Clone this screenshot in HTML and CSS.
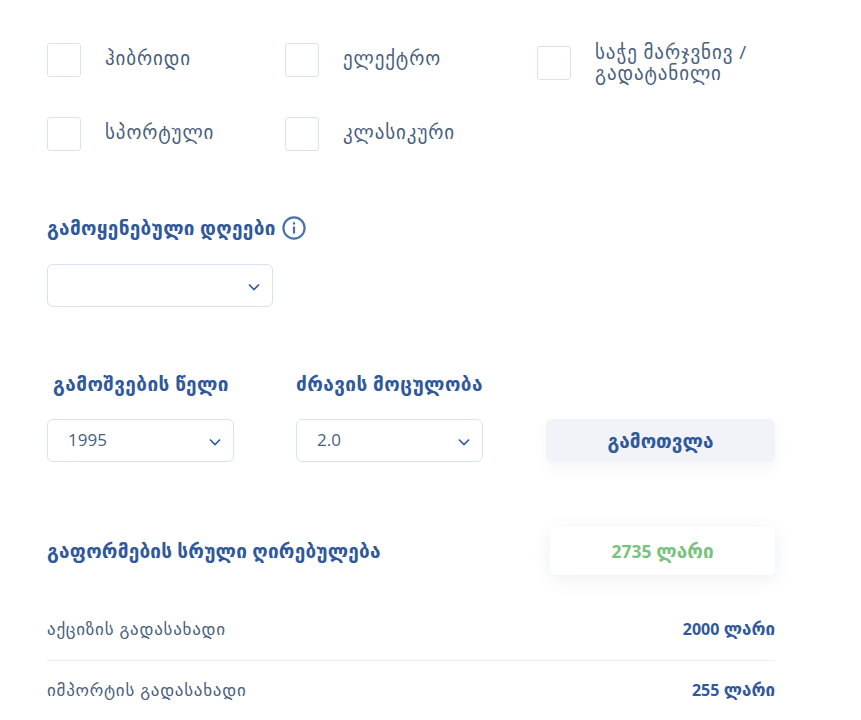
FILE: index.html
```html
<!DOCTYPE html>
<html lang="ka">
<head>
    <meta charset="UTF-8">
    <meta name="viewport" content="width=device-width, initial-scale=1.0">
    <title>განბაჟების კალკულატორი</title>
    <link rel="stylesheet" href="styles.css">
</head>
<body>
    <div class="calc">
        <div class="types">
            <label class="type"><span class="box"></span><span class="type-name">ჰიბრიდი</span></label>
            <label class="type"><span class="box"></span><span class="type-name">ელექტრო</span></label>
            <label class="type type-wide"><span class="box"></span><span class="type-name">საჭე მარჯვნივ / გადატანილი</span></label>
            <label class="type"><span class="box"></span><span class="type-name">სპორტული</span></label>
            <label class="type"><span class="box"></span><span class="type-name">კლასიკური</span></label>
        </div>

        <div class="days">
            <div class="title days-title">გამოყენებული დღეები
                <svg class="info" width="24" height="24" viewBox="0 0 24 24" fill="none" stroke="#4a73ab" stroke-width="2.2">
                    <circle cx="12" cy="12" r="10.6"/>
                    <path d="M12 10.5v7M12 6.3v2.2"/>
                </svg>
            </div>
            <div class="select days-select">
                <svg class="chev" width="12" height="8" viewBox="0 0 12 8" fill="none" stroke="#30599b" stroke-width="1.6"><path d="M1 1.5l5 5 5-5"/></svg>
            </div>
        </div>

        <div class="params">
            <div class="param">
                <div class="title param-year">გამოშვების წელი</div>
                <div class="select"><span class="select-value">1995</span>
                    <svg class="chev" width="12" height="8" viewBox="0 0 12 8" fill="none" stroke="#30599b" stroke-width="1.6"><path d="M1 1.5l5 5 5-5"/></svg>
                </div>
            </div>
            <div class="param">
                <div class="title">ძრავის მოცულობა</div>
                <div class="select"><span class="select-value">2.0</span>
                    <svg class="chev" width="12" height="8" viewBox="0 0 12 8" fill="none" stroke="#30599b" stroke-width="1.6"><path d="M1 1.5l5 5 5-5"/></svg>
                </div>
            </div>
            <button class="calc-btn">გამოთვლა</button>
        </div>

        <div class="total">
            <div class="title">გაფორმების სრული ღირებულება</div>
            <div class="total-value"><span class="num">2735</span> ლარი</div>
        </div>

        <div class="row">
            <span>აქციზის გადასახადი</span>
            <b><span class="num">2000</span> ლარი</b>
        </div>
        <div class="row">
            <span>იმპორტის გადასახადი</span>
            <b><span class="num">255</span> ლარი</b>
        </div>
    </div>
</body>
</html>
```

FILE: styles.css
```css
html, body {
    height: 720px;
    overflow: hidden;
}

body {
    margin: 0;
    background-color: #fff;
    font-family: "Open Sans", "DejaVu Sans", sans-serif;
    color: #4a5f7d;
}

.calc {
    width: 728px;
    padding: 42px 0 0 47px;
}

.types {
    display: grid;
    grid-template-columns: 238px 252px 1fr;
    grid-auto-rows: 35px;
    row-gap: 39px;
    align-items: center;
}

.type {
    display: flex;
    align-items: center;
    gap: 24px;
    font-size: 19px;
    letter-spacing: 0.9px;
}

.box {
    flex: none;
    width: 32px;
    height: 32px;
    border: 1px solid #d8e2f2;
    border-radius: 3px;
}

.type-name {
    line-height: 21px;
    margin-top: -2px;
}

.type-wide {
    align-self: start;
    align-items: flex-start;
}

.type-wide .box {
    margin-top: 4px;
}

.type-wide .type-name {
    max-width: 180px;
    margin-top: 0;
}

.title {
    font-size: 19px;
    letter-spacing: 0.3px;
    font-weight: 700;
    color: #30599b;
}

.days {
    margin-top: 62px;
}

.days-title {
    display: flex;
    align-items: center;
    gap: 6px;
    height: 30px;
}

.select {
    box-sizing: border-box;
    display: flex;
    justify-content: space-between;
    align-items: center;
    height: 43px;
    padding: 0 12px 0 20px;
    border: 1px solid #d8e2f2;
    border-radius: 6px;
    font-size: 17px;
}

.select-value {
    margin-top: -2px;
}

.days-select {
    width: 226px;
    margin-top: 21px;
    justify-content: flex-end;
}

.chev {
    margin-top: 3px;
}

.params {
    display: flex;
    align-items: flex-end;
    margin-top: 62px;
}

.param {
    width: 187px;
    margin-right: 62px;
}

.param:first-child .select {
    width: 187px;
}

.param .title {
    height: 30px;
    line-height: 30px;
    margin-bottom: 20px;
    letter-spacing: 0.42px;
    white-space: nowrap;
}

.param-year {
    padding-left: 6px;
}

.calc-btn {
    width: 229px;
    height: 43px;
    margin-left: 1px;
    border: none;
    border-radius: 6px;
    background-color: #f1f3f8;
    box-shadow: 0 6px 14px rgba(60,80,120,0.06);
    font-family: inherit;
    font-size: 19px;
    font-weight: 700;
    color: #30599b;
}

.total {
    display: flex;
    justify-content: space-between;
    align-items: center;
    margin-top: 65px;
}

.total .title {
    letter-spacing: 0.2px;
}

.total-value {
    width: 225px;
    height: 48px;
    line-height: 48px;
    text-align: center;
    border-radius: 6px;
    background-color: #fff;
    box-shadow: 0 4px 18px rgba(60,80,120,0.09);
    font-size: 19px;
    font-weight: 700;
    color: #79c37f;
}

.total-value .num {
    font-size: 17.5px;
}

.row {
    display: flex;
    justify-content: space-between;
    align-items: center;
    height: 57px;
    padding-bottom: 3px;
    font-size: 17px;
    letter-spacing: 0.75px;
    border-bottom: 1px solid #f0e8f3;
}

.total + .row {
    margin-top: 25px;
}

.row:last-child {
    border-bottom: none;
}

.row b {
    color: #30599b;
    letter-spacing: 0;
}

.row .num {
    font-size: 16px;
}
```
